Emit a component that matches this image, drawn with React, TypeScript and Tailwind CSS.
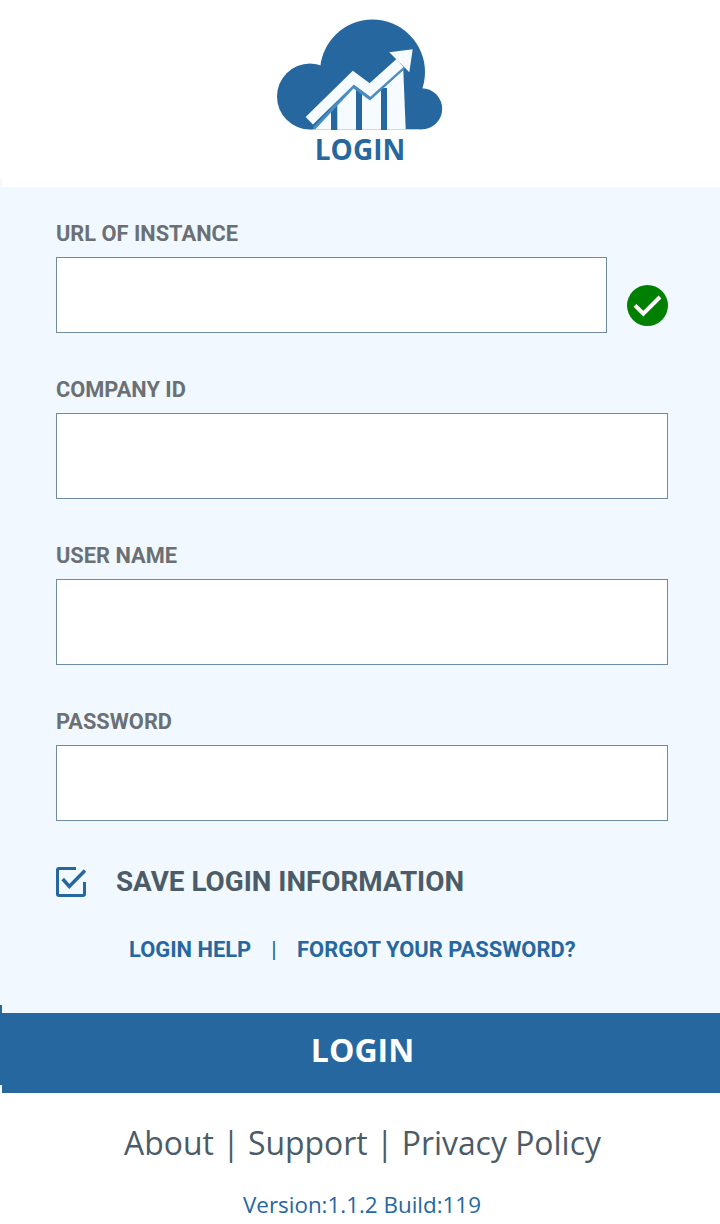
import React from 'react';

const Logo = () => (
  <svg width="180" height="120" viewBox="270 15 180 120" className="block">
    <g fill="#2767a0">
      <circle cx="310" cy="96.5" r="33" />
      <circle cx="372.5" cy="72" r="52.5" />
      <circle cx="421.7" cy="108.8" r="20.5" />
      <rect x="310" y="90" width="112" height="39.3" />
    </g>
    <polygon points="313.3,129.3 353.3,87.3 370,99 403.3,70 405.7,129.3" fill="#f5fbff" />
    <g fill="#2767a0">
      <rect x="331" y="106" width="6.3" height="24" />
      <rect x="356" y="90" width="6" height="40" />
      <rect x="381" y="88" width="6" height="42" />
    </g>
    <polyline points="314,128.5 353.3,86.5 370,98.5 404,67.5" fill="none" stroke="#4a8cc4" strokeWidth="3" />
    <polyline points="309.3,120.7 353.3,77.7 370,90 400,63" fill="none" stroke="#f5fbff" strokeWidth="10.5" />
    <polygon points="389.3,52.3 412.7,49.3 409.3,72.3" fill="#f5fbff" />
  </svg>
);

const CheckCircle = () => (
  <svg width="41" height="41" viewBox="0 0 41 41" className="shrink-0">
    <circle cx="20.5" cy="20.5" r="20.5" fill="#008000" />
    <path d="M8 20.3 L16.3 28.7 L33 12" fill="none" stroke="#ffffff" strokeWidth="4" />
  </svg>
);

const CheckBox = () => (
  <svg width="30" height="30" viewBox="0 0 30 30" className="shrink-0">
    <path d="M20 1.5 H3 Q1.5 1.5 1.5 3 V27 Q1.5 28.5 3 28.5 H27 Q28.5 28.5 28.5 27 V15" fill="none" stroke="#2767a0" strokeWidth="3" />
    <path d="M6.7 12 L13.3 19.5 L29 3.5" fill="none" stroke="#2767a0" strokeWidth="3.5" />
  </svg>
);

function Field({ label, height, top, children }: { label: string; height: string; top: string; children?: React.ReactNode }) {
  return (
    <div className={top}>
      <div className="pt-[1px] h-[26px] text-[21.8px] leading-[26px] font-bold text-[#6b7074]">{label}</div>
      <div className="mt-[11px] flex items-start gap-[20px]">
        <div className={`flex-1 bg-white border border-[#6f8ba3] ${height}`} />
        {children}
      </div>
    </div>
  );
}

export default function App() {
  return (
    <div className="relative w-[720px] h-[1224px] bg-white overflow-hidden font-['Roboto',sans-serif]">
      <header className="h-[187px] flex flex-col items-center pt-[15px]">
        <Logo />
        <div className="-mt-[5px] text-[28px] leading-[38px] font-bold text-[#2767a0] font-['Open_Sans',sans-serif]">LOGIN</div>
      </header>

      {/* panel */}
      <div className="h-[826px] bg-[#f1f8ff] px-[56px] pr-[52px] pt-[33px]">
        <Field label="URL OF INSTANCE" height="h-[76px]" top="">
          <div className="mt-[28px]"><CheckCircle /></div>
        </Field>
        <Field label="COMPANY ID" height="h-[86px]" top="mt-[43px]" />
        <Field label="USER NAME" height="h-[86px]" top="mt-[43px]" />
        <Field label="PASSWORD" height="h-[76px]" top="mt-[43px]" />

        <div className="mt-[46px] flex items-center gap-[30px]">
          <CheckBox />
          <span className="text-[27.8px] leading-[30px] font-bold text-[#4b5b68]">SAVE LOGIN INFORMATION</span>
        </div>

        <div className="mt-[40px] pl-[73px] flex items-center text-[21.9px] leading-[26px] font-bold text-[#2767a0]">
          <span>LOGIN HELP</span>
          <span className="ml-[20px] font-normal">|</span>
          <span className="ml-[20.5px]">FORGOT YOUR PASSWORD?</span>
        </div>
      </div>

      <button className="block w-full h-[80px] bg-[#2767a0] text-white text-[32px] font-bold pl-[5px] pb-[6px] font-['Open_Sans',sans-serif]">
        LOGIN
      </button>

      <footer className="flex flex-col items-center font-['Open_Sans',sans-serif]">
        <div className="mt-[27px] text-[31.9px] leading-[46px] text-[#4b5b68] ml-[5px]">About | Support | Privacy Policy</div>
        <div className="mt-[24px] ml-[4px] text-[22.4px] leading-[30px] text-[#2767a0]">Version:1.1.2 Build:119</div>
      </footer>

      {/* 2px slivers at the left edge, offset from the panel */}
      <div className="absolute left-0 top-[179px] w-[2px] h-[8px] bg-[#f1f8ff]" />
      <div className="absolute left-0 top-[1005px] w-[2px] h-[8px] bg-[#2767a0]" />
      <div className="absolute left-0 top-[1085px] w-[2px] h-[8px] bg-white" />
    </div>
  );
}
